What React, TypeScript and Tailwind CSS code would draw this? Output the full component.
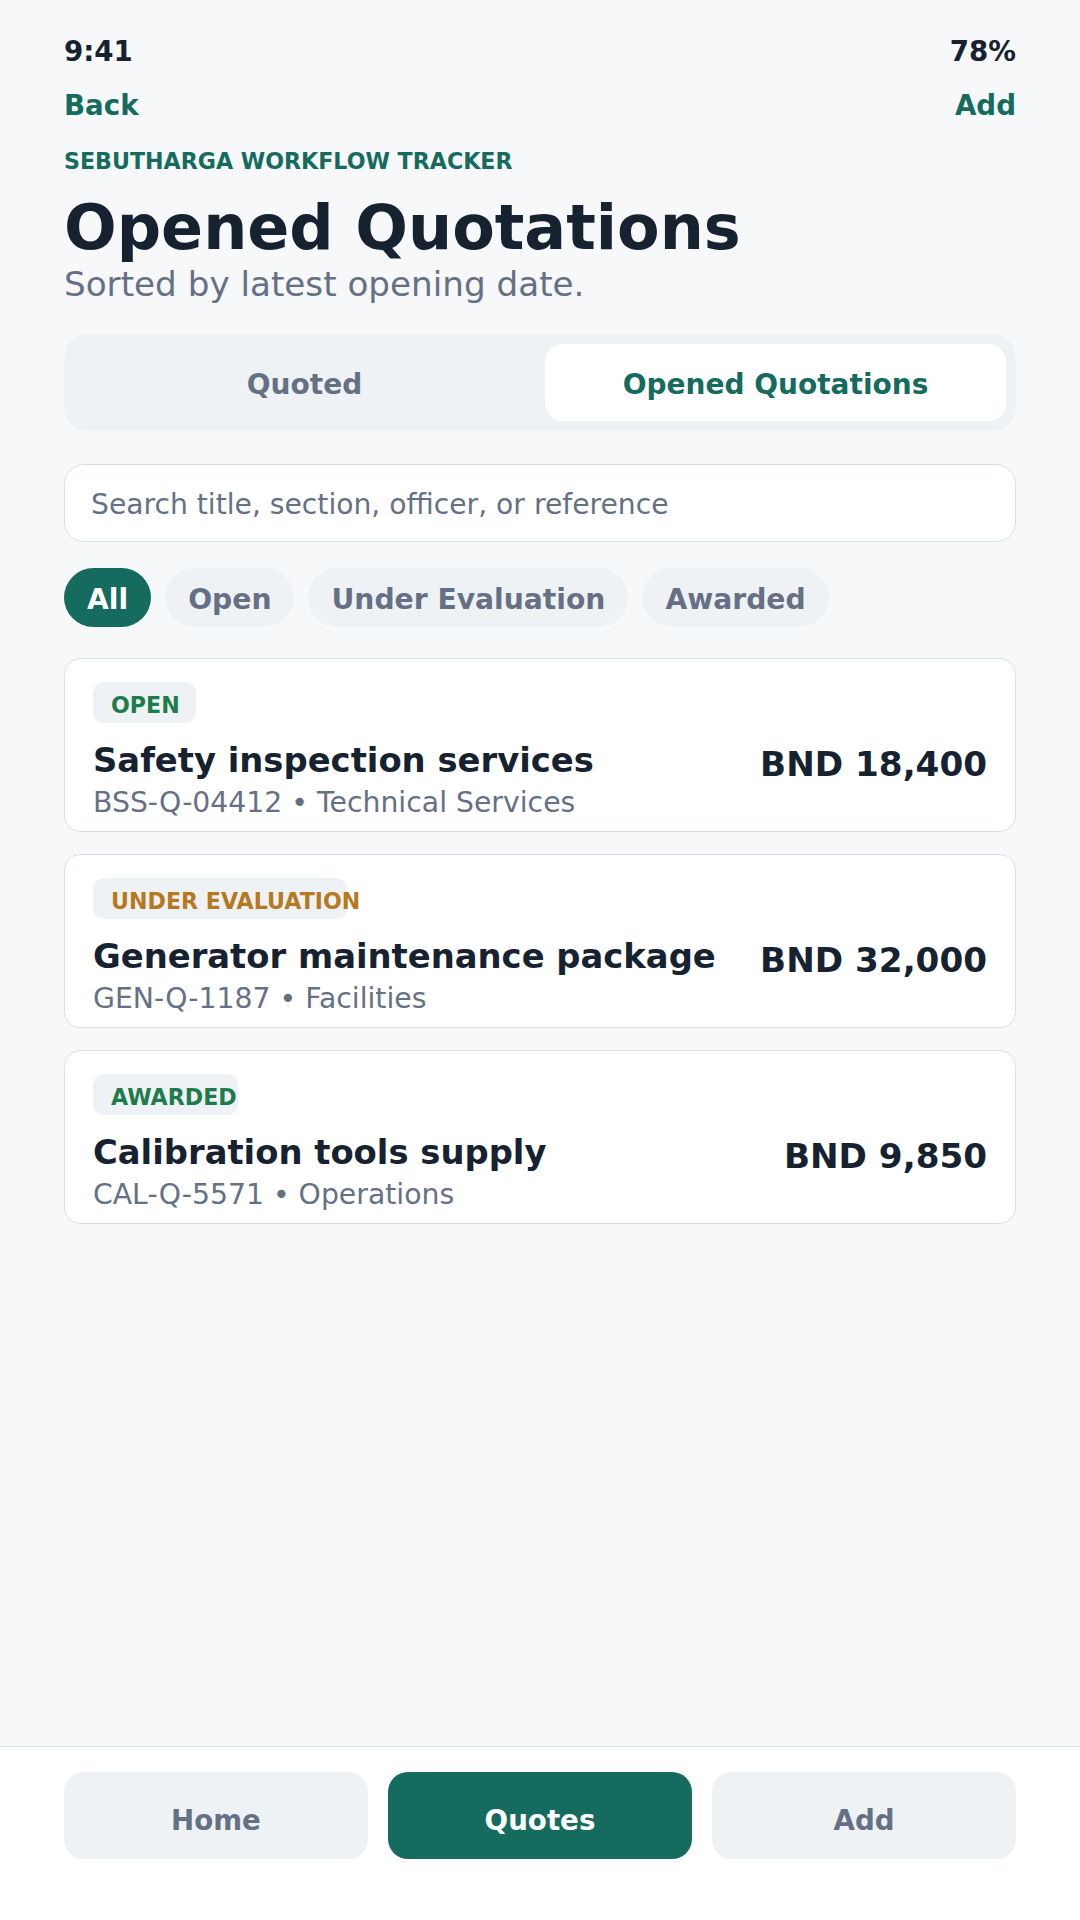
import { useState } from 'react'

type Status = 'open' | 'evaluation' | 'awarded'

const statusStyles: Record<Status, { label: string; className: string }> = {
	open: { label: 'OPEN', className: 'w-[103px] text-[#1e7b4b]' },
	evaluation: { label: 'UNDER EVALUATION', className: 'w-[254px] text-[#b7791f]' },
	awarded: { label: 'AWARDED', className: 'w-[145px] text-[#1e7b4b]' },
}

const quotations: {
	title: string
	reference: string
	section: string
	amount: string
	status: Status
}[] = [
	{
		title: 'Safety inspection services',
		reference: 'BSS-Q-04412',
		section: 'Technical Services',
		amount: 'BND 18,400',
		status: 'open',
	},
	{
		title: 'Generator maintenance package',
		reference: 'GEN-Q-1187',
		section: 'Facilities',
		amount: 'BND 32,000',
		status: 'evaluation',
	},
	{
		title: 'Calibration tools supply',
		reference: 'CAL-Q-5571',
		section: 'Operations',
		amount: 'BND 9,850',
		status: 'awarded',
	},
]

const filters = ['All', 'Open', 'Under Evaluation', 'Awarded']

function App() {
	const [tab, setTab] = useState('opened')
	const [filter, setFilter] = useState('All')
	const [query, setQuery] = useState('')

	return (
		<div className="flex h-[1920px] w-full flex-col bg-[#f6f8fa] font-['DejaVu_Sans',sans-serif] text-[#172230]">
			<div className="flex-1 px-16">
				{/* status bar */}
				<div className="flex justify-between pt-[35px] text-[27.7px] font-bold leading-[34px]">
					<span>9:41</span>
					<span>78%</span>
				</div>

				<div className="mt-[20px] flex justify-between text-[27.7px] font-bold leading-[34px] text-[#156b5d]">
					<button>Back</button>
					<button>Add</button>
				</div>

				<p className="mt-[24px] text-[22.15px] font-bold leading-[28px] text-[#156b5d]">
					SEBUTHARGA WORKFLOW TRACKER
				</p>
				<h1 className="mt-[17px] text-[62px] font-bold leading-[72px]">Opened Quotations</h1>
				<p className="text-[34.2px] leading-[40px] text-[#667085]">Sorted by latest opening date.</p>

				{/* tabs */}
				<div className="mt-[30px] grid h-[97px] grid-cols-2 gap-[10px] rounded-[24px] bg-[#eef2f5] p-[10px]">
					<button
						onClick={() => setTab('quoted')}
						className={
							tab === 'quoted'
								? 'rounded-[18px] bg-white pt-[5px] text-[28px] font-bold text-[#156b5d]'
								: 'rounded-[18px] pt-[5px] text-[28px] font-bold text-[#667085]'
						}
					>
						Quoted
					</button>
					<button
						onClick={() => setTab('opened')}
						className={
							tab === 'opened'
								? 'rounded-[18px] bg-white pt-[5px] text-[28px] font-bold text-[#156b5d]'
								: 'rounded-[18px] pt-[5px] text-[28px] font-bold text-[#667085]'
						}
					>
						Opened Quotations
					</button>
				</div>

				<div className="mt-[33px] flex h-[78px] items-center rounded-[20px] border border-[#d9e0e7] bg-white px-[26px] pt-[5px]">
					<input
						value={query}
						onChange={(e) => setQuery(e.target.value)}
						placeholder="Search title, section, officer, or reference"
						className="w-full bg-transparent text-[28.2px] outline-none placeholder:text-[#667085]"
					/>
				</div>

				{/* status filters */}
				<div className="mt-[26px] flex gap-[14px]">
					{filters.map((f) => (
						<button
							key={f}
							onClick={() => setFilter(f)}
							className={
								f === filter
									? 'h-[59px] rounded-full bg-[#156b5d] px-[23px] pt-[5px] text-[28.2px] font-bold text-white'
									: 'h-[59px] rounded-full bg-[#eef2f5] px-[23px] pt-[5px] text-[28.2px] font-bold text-[#667085]'
							}
						>
							{f}
						</button>
					))}
				</div>

				<div className="mt-[31px] flex flex-col gap-[22px]">
					{quotations.map((q) => {
						const s = statusStyles[q.status]
						return (
							<div
								key={q.reference}
								className="rounded-[16px] border border-[#d9e0e7] bg-white px-[28px] pb-[11px] pt-[23px]"
							>
								<div
									className={`flex h-[41px] items-center whitespace-nowrap rounded-[11px] bg-[#eef2f5] pl-[18px] pt-[6px] text-[22.15px] font-bold ${s.className}`}
								>
									{s.label}
								</div>
								<div className="mt-[18px] flex items-start justify-between gap-4">
									<div>
										<p className="text-[33.8px] font-bold leading-[40px]">{q.title}</p>
										<p className="mt-[5px] text-[28.3px] leading-[34px] text-[#667085]">
											{q.reference} • {q.section}
										</p>
									</div>
									<p className="mt-[3px] whitespace-nowrap text-[34.2px] font-bold leading-[40px]">
										{q.amount}
									</p>
								</div>
							</div>
						)
					})}
				</div>
			</div>

			{/* bottom navigation */}
			<nav className="grid grid-cols-3 gap-[20px] border-t border-[#d9e0e7] bg-white px-16 pb-[61px] pt-[25px]">
				<button className="h-[87px] rounded-[20px] bg-[#eef2f5] pt-[11px] text-[27.7px] font-bold text-[#667085]">
					Home
				</button>
				<button className="h-[87px] rounded-[20px] bg-[#156b5d] pt-[11px] text-[27.7px] font-bold text-white">
					Quotes
				</button>
				<button className="h-[87px] rounded-[20px] bg-[#eef2f5] pt-[11px] text-[27.7px] font-bold text-[#667085]">
					Add
				</button>
			</nav>
		</div>
	)
}

export default App
